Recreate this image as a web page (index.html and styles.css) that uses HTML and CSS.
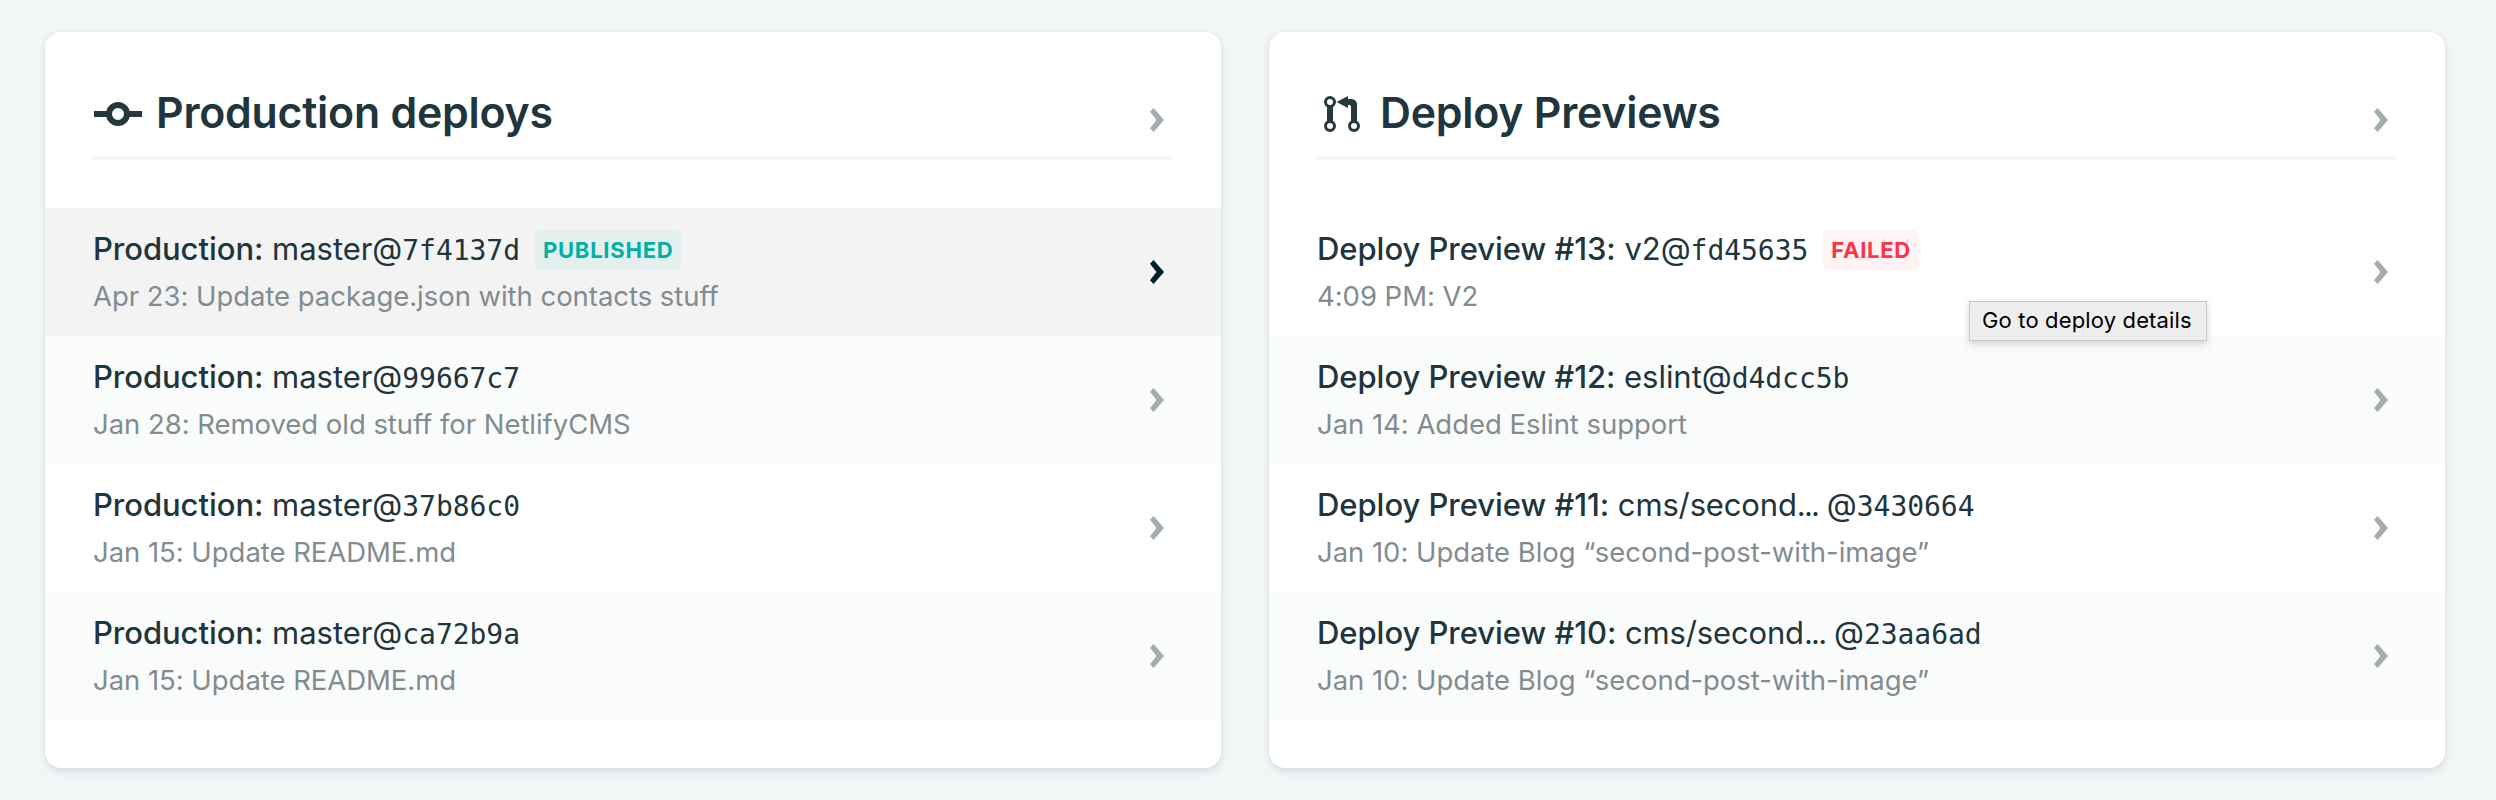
FILE: index.html
```
<!DOCTYPE html>
<html lang="en">
<head>
<meta charset="utf-8">
<title>Deploys</title>
<link rel="stylesheet" href="styles.css">
</head>
<body>
<svg class="defs" aria-hidden="true">
  <symbol id="chevron" viewBox="0 0 14 24"><path d="M0 3.8 3.600 0 14 12 3.600 24 0 20.200 6.500 12Z"/></symbol>
</svg>
<main class="board">
  <section class="card">
    <header class="card-header">
      <svg class="card-icon" viewBox="0 0 48 48"><path d="M1 21h14v6H1zM35 21h14v6H35z"/><circle class="ring ring-large" cx="25" cy="24" r="9"/></svg>
      <h2 class="card-title">Production deploys</h2>
      <svg class="chevron"><use href="#chevron"/></svg>
    </header>
    <ul class="deploys">
      <li class="deploy deploy-active">
        <div class="deploy-text">
          <h3 class="deploy-title"><strong>Production:</strong> master@<code>7f4137d</code><span class="badge badge-published">PUBLISHED</span></h3>
          <p class="deploy-note">Apr 23: Update package.json with contacts stuff</p>
        </div>
        <svg class="chevron"><use href="#chevron"/></svg>
      </li>
      <li class="deploy">
        <div class="deploy-text">
          <h3 class="deploy-title"><strong>Production:</strong> master@<code>99667c7</code></h3>
          <p class="deploy-note">Jan 28: Removed old stuff for NetlifyCMS</p>
        </div>
        <svg class="chevron"><use href="#chevron"/></svg>
      </li>
      <li class="deploy">
        <div class="deploy-text">
          <h3 class="deploy-title"><strong>Production:</strong> master@<code>37b86c0</code></h3>
          <p class="deploy-note">Jan 15: Update README.md</p>
        </div>
        <svg class="chevron"><use href="#chevron"/></svg>
      </li>
      <li class="deploy">
        <div class="deploy-text">
          <h3 class="deploy-title"><strong>Production:</strong> master@<code>ca72b9a</code></h3>
          <p class="deploy-note">Jan 15: Update README.md</p>
        </div>
        <svg class="chevron"><use href="#chevron"/></svg>
      </li>
    </ul>
  </section>

  <section class="card">
    <header class="card-header">
      <svg class="card-icon" viewBox="0 0 48 48"><path d="M10 17h6v14h-6zM19.500 12 31 6v3h3.500a5.500 5.500 0 0 1 5.500 5.500V31h-6V16.500Q34 15 32.500 15H31v3Z"/><circle class="ring" cx="13" cy="12" r="4.500"/><circle class="ring" cx="13" cy="36" r="4.500"/><circle class="ring" cx="37" cy="36" r="4.500"/></svg>
      <h2 class="card-title">Deploy Previews</h2>
      <svg class="chevron"><use href="#chevron"/></svg>
    </header>
    <ul class="deploys">
      <li class="deploy">
        <div class="deploy-text">
          <h3 class="deploy-title"><strong>Deploy Preview #13:</strong> v2@<code>fd45635</code><span class="badge badge-failed">FAILED</span></h3>
          <p class="deploy-note">4:09 PM: V2</p>
        </div>
        <svg class="chevron"><use href="#chevron"/></svg>
        <div class="tooltip">Go to deploy details</div>
      </li>
      <li class="deploy">
        <div class="deploy-text">
          <h3 class="deploy-title"><strong>Deploy Preview #12:</strong> eslint@<code>d4dcc5b</code></h3>
          <p class="deploy-note">Jan 14: Added Eslint support</p>
        </div>
        <svg class="chevron"><use href="#chevron"/></svg>
      </li>
      <li class="deploy">
        <div class="deploy-text">
          <h3 class="deploy-title"><strong>Deploy Preview #11:</strong> <span class="branch">cms/second<span class="dots">...</span></span> @<code>3430664</code></h3>
          <p class="deploy-note">Jan 10: Update Blog “second-post-with-image”</p>
        </div>
        <svg class="chevron"><use href="#chevron"/></svg>
      </li>
      <li class="deploy">
        <div class="deploy-text">
          <h3 class="deploy-title"><strong>Deploy Preview #10:</strong> <span class="branch">cms/second<span class="dots">...</span></span> @<code>23aa6ad</code></h3>
          <p class="deploy-note">Jan 10: Update Blog “second-post-with-image”</p>
        </div>
        <svg class="chevron"><use href="#chevron"/></svg>
      </li>
    </ul>
  </section>
</main>
</body>
</html>
```
FILE: styles.css
```
* { box-sizing: border-box; margin: 0; padding: 0; }

body {
  background: #f2f6f7;
  color: #20353c;
  font-family: Inter, "Liberation Sans", sans-serif;
}

.defs { display: block; width: 0; height: 0; }

.board {
  display: grid;
  grid-template-columns: 1fr 1fr;
  gap: 48px;
  height: 800px;
  padding: 32px 51px 32px 45px;
}

.card {
  background: #fff;
  border-radius: 16px;
  box-shadow: 0 4px 8px rgba(14, 50, 55, 0.1), 0 0 4px rgba(14, 50, 55, 0.05);
}

.card-header {
  display: flex;
  align-items: center;
  height: 128px;
  margin: 0 48px 48px;
  padding: 51px 9px 13px 0;
  border-bottom: 4px solid #f3f7f9;
}

.card-icon {
  flex: none;
  width: 48px;
  height: 48px;
  margin-right: 15px;
  margin-top: 1px;
  overflow: visible;
  fill: #23383f;
}

.ring { fill: none; stroke: #23383f; stroke-width: 3; }
.ring-large { stroke-width: 6; }

.card-title {
  flex: 1;
  font-size: 42.8px;
  font-weight: 600;
  line-height: 60px;
  letter-spacing: -0.22px;
}

.chevron {
  flex: none;
  width: 14px;
  height: 24px;
  fill: #a3adb0;
}

.card-header .chevron { margin-top: 14px; }

.deploys { list-style: none; }

.deploy {
  position: relative;
  display: flex;
  align-items: center;
  height: 128px;
  padding: 0 57px 0 48px;
}

.deploy:nth-child(even) { background: #fafcfb; }
.deploy-active { background: #f3f3f3; }
.deploy-active .chevron { fill: #00202a; }

.deploy-text {
  flex: 1;
  height: 96px;
}

.deploy-title {
  height: 48px;
  padding-top: 1px;
  font-size: 31px;
  font-weight: 400;
  line-height: 48px;
  letter-spacing: -0.04px;
  white-space: nowrap;
}

.deploy-title strong { font-weight: 500; }

.deploy-title code {
  font-family: "DejaVu Sans Mono", monospace;
  font-size: 28px;
  line-height: 1;
}

.branch { letter-spacing: -0.15px; }
.dots { letter-spacing: -1.8px; }

.badge {
  display: inline-block;
  height: 40px;
  margin-left: 15px;
  padding: 0 8px;
  border-radius: 6px;
  font-size: 22px;
  font-weight: 700;
  line-height: 40px;
  letter-spacing: 0.75px;
  vertical-align: 2px;
}

.badge-published { background: #e4f0f0; color: #00b0a4; }
.badge-failed { background: #fff3f3; color: #ff3345; }

.deploy-note {
  margin-top: 3px;
  color: #828c90;
  font-size: 27.5px;
  line-height: 42px;
  letter-spacing: -0.04px;
}

.tooltip {
  position: absolute;
  z-index: 1;
  top: 93px;
  left: 700px;
  width: 238px;
  height: 40px;
  padding-left: 12px;
  background: #eee;
  border: 1px solid #c6c6c6;
  box-shadow: 0 3px 8px rgba(0, 0, 0, 0.16);
  color: #000;
  font-size: 22px;
  line-height: 37px;
  letter-spacing: 0.15px;
  white-space: nowrap;
}
```
